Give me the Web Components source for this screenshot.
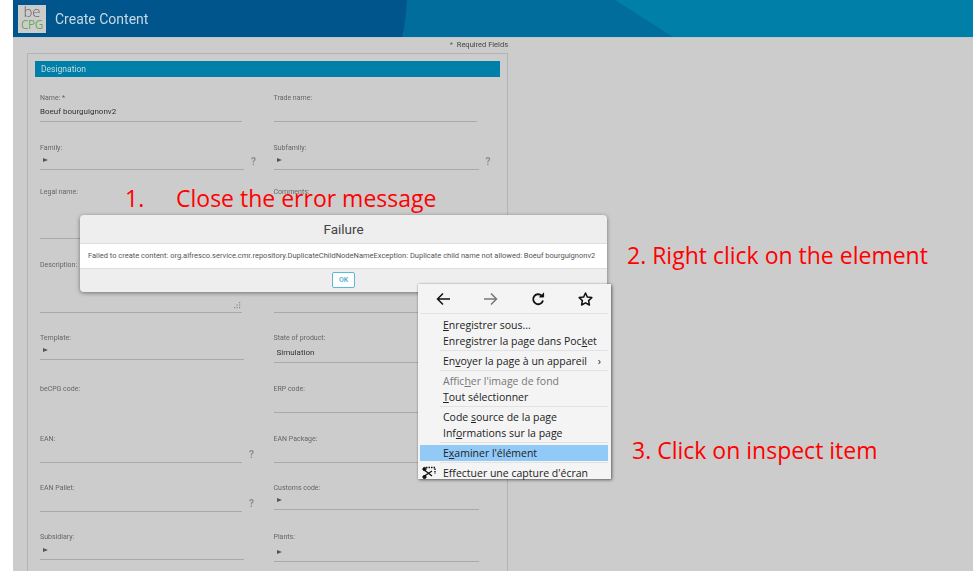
<!DOCTYPE html>
<html lang="en">
<head>
<meta charset="utf-8">
<title>Create Content</title>
<style>
  html, body { margin: 0; height: 571px; overflow: hidden; background: #fff; }
  body { font-family: Roboto, sans-serif; position: relative; }
</style>
</head>
<body>
<be-page>
  <be-header slot="header" title="Create Content"></be-header>
  <be-card>
    <be-field label="Name:" required value="Boeuf bourguignonv2" line="27" width="202"></be-field>
    <be-field label="Trade name:" line="27" width="203"></be-field>
    <be-field label="Family:" select help line="25" width="204"></be-field>
    <be-field label="Subfamily:" select help line="25" width="205"></be-field>
    <be-field label="Legal name:" help line="50" width="202"></be-field>
    <be-field label="Comments:" line="50" width="203"></be-field>
    <be-field label="Description:" grip line="51" width="202"></be-field>
    <be-field label="" line="51" width="203"></be-field>
    <be-field label="Template:" select line="25" width="204"></be-field>
    <be-field label="State of product:" value="Simulation" indent line="28" width="205"></be-field>
    <be-field label="beCPG code:" line="27" width="202" noline></be-field>
    <be-field label="ERP code:" line="27" width="203"></be-field>
    <be-field label="EAN:" help line="27" width="202"></be-field>
    <be-field label="EAN Package:" line="27" width="203"></be-field>
    <be-field label="EAN Pallet:" help line="27" width="202"></be-field>
    <be-field label="Customs code:" select line="25" width="205"></be-field>
    <be-field label="Subsidiary:" select line="26" width="204"></be-field>
    <be-field label="Plants:" select line="28" width="205"></be-field>
  </be-card>
</be-page>

<be-note x="125" y="183"><span>1.</span><span style="position:absolute;left:51px">Close the error message</span></be-note>
<be-note x="627" y="240">2. Right click on the element</be-note>
<be-note x="632" y="435">3. Click on inspect item</be-note>

<be-dialog title="Failure">Failed to create content: org.alfresco.service.cmr.repository.DuplicateChildNodeNameException: Duplicate child name not allowed: Boeuf bourguignonv2</be-dialog>

<be-menu></be-menu>

<script>
class bePage extends HTMLElement {
	constructor() {
		super();
		this.attachShadow({ mode: 'open' });
		this.shadowRoot.innerHTML = `
     <style>
     :host { display: block; margin-left: 13px; height: 571px; background: #ccc; overflow: hidden; filter: blur(0.35px); }
     </style>
     <slot name="header"></slot>
     <slot></slot>
    `;
	}
}

class beHeader extends HTMLElement {
	constructor() {
		super();
		this.attachShadow({ mode: 'open' });
	}

	connectedCallback() {
		this.shadowRoot.innerHTML = `
     <style>
     :host { display: block; }
     .bar { position: relative; height: 37px; background: #007fa8; display: flex; align-items: center; gap: 9px; padding-left: 5px; border-bottom: 1px solid #c0c6c9; }
     svg { position: absolute; left: 0; top: 0; }
     .logo { position: relative; width: 28px; height: 28px; background: #ccc; display: flex; flex-direction: column; align-items: center; font-family: 'Open Sans', sans-serif; line-height: 11px; }
     .be { color: #666; font-size: 15px; font-weight: 300; margin-top: 1px; height: 13px; }
     .cpg { color: #6cab55; font-size: 12px; letter-spacing: -0.5px; }
     .title { position: relative; color: #c6d9e4; font-size: 14px; }
     </style>
     <div class="bar">
       <svg width="960" height="37" viewBox="0 0 960 37">
         <path d="M0 0H602L660 37H0Z" fill="#006d9d"/>
         <path d="M0 0H394C393 14 392 26 389 37H0Z" fill="#00568c"/>
       </svg>
       <div class="logo"><span class="be">be</span><span class="cpg">CPG</span></div>
       <div class="title">${this.getAttribute('title')}</div>
     </div>
    `;
	}
}

class beCard extends HTMLElement {
	constructor() {
		super();
		this.attachShadow({ mode: 'open' });
		this.shadowRoot.innerHTML = `
     <style>
     :host { display: block; width: 495px; }
     .required { text-align: right; font-size: 7.5px; line-height: 14px; color: #444; height: 15px; padding-right: 0; }
     .card { margin-left: 14px; width: 465px; border: 1px solid #b4b4b4; padding: 7px 7px 0; height: 600px; }
     h2 { margin: 0 0 17px; height: 16px; background: #007fa8; color: #c4d8e2; font: 400 8.5px/16px Roboto, sans-serif; padding-left: 6px; }
     .fields { display: grid; grid-template-columns: 233.5px 233.5px; grid-template-rows: 50px 44px 73px 73px 51px 50px 49px 49px 40px; padding-left: 5px; }
     </style>
     <div class="required"><span style="color:#3c763d">*</span>&nbsp; Required Fields</div>
     <div class="card">
       <h2>Designation</h2>
       <div class="fields"><slot></slot></div>
     </div>
    `;
	}
}

class beField extends HTMLElement {
	constructor() {
		super();
		this.attachShadow({ mode: 'open' });
	}

	connectedCallback() {
		const label = this.getAttribute('label');
		const value = this.getAttribute('value') || '';
		const line = Number(this.getAttribute('line'));
		const width = this.getAttribute('width');
		const star = this.hasAttribute('required') ? ' <span style="color:#3c763d">*</span>' : '';
		const arrow = this.hasAttribute('select') ? '<span class="arrow"></span>' : '';
		const help = this.hasAttribute('help') ? '<span class="help">?</span>' : '';
		const grip = this.hasAttribute('grip')
			? '<svg class="grip" width="8" height="7" viewBox="0 0 8 7" fill="#888"><rect x="6" y="0" width="1.2" height="1.2"/><rect x="3.5" y="2.5" width="1.2" height="1.2"/><rect x="6" y="2.5" width="1.2" height="1.2"/><rect x="1" y="5" width="1.2" height="1.2"/><rect x="3.5" y="5" width="1.2" height="1.2"/><rect x="6" y="5" width="1.2" height="1.2"/></svg>'
			: '';
		this.shadowRoot.innerHTML = `
     <style>
     :host { display: block; }
     .label { font-size: 7px; line-height: 9px; color: #666; height: 9px; }
     .row { display: flex; align-items: flex-end; height: ${line - 8}px; }
     .control { position: relative; box-sizing: border-box; width: ${width}px; height: 100%; border-bottom: 1.5px solid ${this.hasAttribute('noline') ? 'transparent' : '#a9a9a9'}; display: flex; align-items: flex-end; padding-bottom: 4px; font-size: 8px; line-height: 10px; color: #333; ${this.hasAttribute('indent') ? 'padding-left: 3px;' : ''} }
     .arrow { width: 0; height: 0; margin: 0 0 3px 3px; border-left: 5px solid #555; border-top: 2.5px solid transparent; border-bottom: 2.5px solid transparent; }
     .help { width: 9px; margin: 0 0 2px 5px; font: 700 10px/12px Roboto, sans-serif; color: #8d8d8d; text-align: center; }
     .grip { position: absolute; right: 1px; bottom: 3px; }
     </style>
     <div class="label">${label}${star}</div>
     <div class="row">
       <div class="control">${arrow}${value}${grip}</div>${help}
     </div>
    `;
	}
}

class beNote extends HTMLElement {
	constructor() {
		super();
		this.attachShadow({ mode: 'open' });
	}

	connectedCallback() {
		this.shadowRoot.innerHTML = `
     <style>
     :host { position: absolute; left: ${this.getAttribute('x')}px; top: ${this.getAttribute('y')}px; color: #f00; font: 400 23px/30px 'Open Sans', sans-serif; white-space: nowrap; }
     </style>
     <slot></slot>
    `;
	}
}

class beDialog extends HTMLElement {
	constructor() {
		super();
		this.attachShadow({ mode: 'open' });
	}

	connectedCallback() {
		this.shadowRoot.innerHTML = `
     <style>
     :host { position: absolute; left: 80px; top: 215px; width: 527px; height: 77px; border-radius: 4px; overflow: hidden; box-shadow: 0 1px 4px rgba(0,0,0,.45); background: #eee; font-family: Roboto, sans-serif; }
     .title { height: 28px; border-bottom: 1px solid #ddd; text-align: center; font-size: 13.5px; line-height: 28px; color: #444; }
     .body { height: 24px; background: #fff; border-bottom: 1px solid #ddd; padding-left: 8px; font-size: 7.5px; line-height: 24px; color: #555; white-space: nowrap; }
     .foot { display: flex; justify-content: center; padding-top: 3px; }
     button { box-sizing: border-box; width: 23px; height: 16px; padding: 0; border: 1px solid #5bb8dc; border-radius: 2px; background: #fff; color: #49a9d0; font: 500 7px Roboto, sans-serif; }
     </style>
     <div class="title">${this.getAttribute('title')}</div>
     <div class="body"><slot></slot></div>
     <div class="foot"><button>OK</button></div>
    `;
	}
}

class beMenu extends HTMLElement {
	constructor() {
		super();
		this.attachShadow({ mode: 'open' });
		this.shadowRoot.innerHTML = `
     <style>
     :host { position: absolute; left: 418px; top: 284px; box-sizing: border-box; width: 193px; height: 195px; background: #f4f4f4; box-shadow: 1px 1px 3px rgba(0,0,0,.5), 0 0 1px rgba(0,0,0,.3); padding: 0 3px 0 2px; font: 400 10.5px/16px 'Open Sans', sans-serif; color: #222; }
     .icons { display: flex; align-items: center; height: 29px; border-bottom: 1px solid #e2e2e2; margin-bottom: 3px; }
     .icons svg { position: relative; display: block; }
     .item { position: relative; display: flex; justify-content: space-between; height: 16px; padding-left: 23px; padding-right: 7px; white-space: nowrap; }
     .off { color: #777; }
     .on { background: #91c9f7; }
     hr { border: 0; height: 1px; background: #e2e2e2; margin: 1px 0 2px 20px; }
     .shot { position: absolute; left: 2px; top: 1px; }
     u { text-underline-offset: 1px; text-decoration-thickness: 1px; }
     </style>
     <div class="icons">
       <svg style="margin-left:16px" width="15" height="14" viewBox="0 0 15 14" fill="none" stroke="#111" stroke-width="1.5"><path d="M14 7H1.5M7 1.5 1.5 7 7 12.5"/></svg>
       <svg style="margin-left:32px" width="15" height="14" viewBox="0 0 15 14" fill="none" stroke="#777" stroke-width="1.5"><path d="M1 7H13.5M8 1.5 13.5 7 8 12.5"/></svg>
       <svg style="margin-left:33px" width="15" height="14" viewBox="0 0 15 14" fill="none" stroke="#111" stroke-width="1.8"><path d="M12 8.5A5 5 0 1 1 10.6 3.6"/><path d="M12.6 .8V5H8.4" fill="#111" stroke-width="1"/></svg>
       <svg style="margin-left:32px" width="15" height="14" viewBox="0 0 15 14" fill="none" stroke="#111" stroke-width="1.5" stroke-linejoin="round"><path d="M7.5 1 9.4 5.1 13.8 5.6 10.6 8.6 11.4 13 7.5 10.8 3.6 13 4.4 8.6 1.2 5.6 5.6 5.1Z"/></svg>
     </div>
     <div class="item"><span><u>E</u>nregistrer sous...</span></div>
     <div class="item"><span>Enregistrer la page dans Poc<u>k</u>et</span></div>
     <hr>
     <div class="item"><span>En<u>v</u>oyer la page à un appareil</span><span>›</span></div>
     <hr>
     <div class="item off"><span>Affic<u>h</u>er l'image de fond</span></div>
     <div class="item"><span><u>T</u>out sélectionner</span></div>
     <hr>
     <div class="item"><span>Code <u>s</u>ource de la page</span></div>
     <div class="item"><span>Inf<u>o</u>rmations sur la page</span></div>
     <hr>
     <div class="item on"><span>E<u>x</u>aminer l'élément</span></div>
     <hr>
     <div class="item"><span>Effectuer une capture d'écran</span>
       <svg class="shot" width="14" height="14" viewBox="0 0 14 14" fill="none" stroke="#111"><path d="M4 1.5H13V8" stroke-dasharray="1.5 1" stroke-width="1.4"/><path d="M1 3 10 10M1 11 10 5" stroke-width="1.3"/><circle cx="2.5" cy="3" r="1.6" fill="#111"/><circle cx="2.5" cy="11" r="1.6" fill="#111"/></svg>
     </div>
    `;
	}
}

customElements.define('be-page', bePage);
customElements.define('be-header', beHeader);
customElements.define('be-card', beCard);
customElements.define('be-field', beField);
customElements.define('be-note', beNote);
customElements.define('be-dialog', beDialog);
customElements.define('be-menu', beMenu);
</script>
</body>
</html>
